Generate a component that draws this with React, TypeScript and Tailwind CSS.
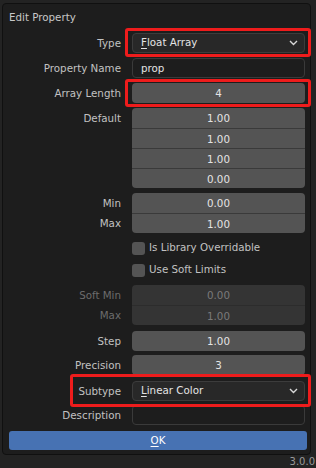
import React from "react";

const font = { fontFamily: '"DejaVu Sans", "Liberation Sans", sans-serif' };

function Chevron() {
  return (
    <svg width="9" height="6" viewBox="0 0 9 6" className="shrink-0">
      <path d="M1 1 L4.5 4.5 L8 1" fill="none" stroke="#d8d8d8" strokeWidth="1.4" />
    </svg>
  );
}

function Row({ label, dim, children }: { label: string; dim?: boolean; children: React.ReactNode }) {
  return (
    <div className="flex items-start gap-[11px]">
      <div
        className={`w-[113px] shrink-0 text-right text-[10.3px] leading-[20px] ${dim ? "text-[#6c6c6c]" : "text-[#c2c2c2]"}`}
      >
        {label}
      </div>
      <div className="w-[174px]">{children}</div>
    </div>
  );
}

function NumField({ value }: { value: string }) {
  return (
    <div className="h-[20px] rounded-[4px] bg-[#545454] text-center text-[10.3px] leading-[20px] text-[#e4e4e4]">{value}</div>
  );
}

function Stack({ values, disabled }: { values: string[]; disabled?: boolean }) {
  return (
    <div className={`flex flex-col overflow-hidden rounded-[4px] ${disabled ? "bg-[#343434]" : "bg-[#545454]"}`}>
      {values.map((v, i) => (
        <div
          key={i}
          className={`h-[20px] text-center text-[10.3px] leading-[20px] ${
            disabled ? "text-[#7a7a7a]" : "text-[#e4e4e4]"
          } ${i > 0 ? (disabled ? "border-t border-[#2c2c2c]" : "border-t border-[#3a3a3a]") : ""}`}
        >
          {v}
        </div>
      ))}
    </div>
  );
}

function Dropdown({ first, rest }: { first: string; rest: string }) {
  return (
    <div className="flex h-[20px] items-center justify-between rounded-[4px] border border-[#3c3c3c] bg-[#282828] pl-[8px] pr-[6px] text-[10.3px] text-[#e4e4e4]">
      <span>
        <span className="underline underline-offset-2">{first}</span>
        {rest}
      </span>
      <Chevron />
    </div>
  );
}

function TextField({ value }: { value: string }) {
  return (
    <div className="h-[20px] rounded-[4px] border border-[#3a3a3a] bg-[#1d1d1d] pl-[8px] text-[10.3px] leading-[18px] text-[#e4e4e4]">{value}</div>
  );
}

function Check({ label }: { label: string }) {
  return (
    <div className="flex h-[22px] items-center gap-[4px] pl-[124px]">
      <div className="h-[13px] w-[13px] rounded-[3px] bg-[#545454]" />
      <span className="text-[10.3px] text-[#c2c2c2]">{label}</span>
    </div>
  );
}

export default function App() {
  return (
    <div className="relative h-[468px] w-[316px] overflow-hidden bg-[#232323]" style={font}>
      <div className="ml-[2px] mt-[3px] h-[452px] w-[309px] rounded-[4px] border border-[#101010] bg-[#1d1d1d] px-[5px] pt-[5px]">
        <div className="mb-[8px] h-[16px] pl-[1px] text-[10.3px] leading-[16px] text-[#c8c8c8]">Edit Property</div>
        <div className="flex flex-col">
          <Row label="Type">
            <Dropdown first="F" rest="loat Array" />
          </Row>
          <div className="h-[5px]" />
          <Row label="Property Name">
            <TextField value="prop" />
          </Row>
          <div className="h-[5px]" />
          <Row label="Array Length">
            <NumField value="4" />
          </Row>
          <div className="h-[5px]" />
          <Row label="Default">
            <Stack values={["1.00", "1.00", "1.00", "0.00"]} />
          </Row>
          <div className="h-[5px]" />
          <div className="relative">
            <Row label="Min">
              <Stack values={["0.00", "1.00"]} />
            </Row>
            <div className="absolute left-0 top-[20px] w-[113px] text-right text-[10.3px] leading-[20px] text-[#c2c2c2]">Max</div>
          </div>
          <div className="h-[4px]" />
          <Check label="Is Library Overridable" />
          <Check label="Use Soft Limits" />
          <div className="h-[4px]" />
          <div className="relative">
            <Row label="Soft Min" dim>
              <Stack values={["0.00", "1.00"]} disabled />
            </Row>
            <div className="absolute left-0 top-[20px] w-[113px] text-right text-[10.3px] leading-[20px] text-[#6c6c6c]">Max</div>
          </div>
          <div className="h-[6px]" />
          <Row label="Step">
            <NumField value="1.00" />
          </Row>
          <div className="h-[4px]" />
          <Row label="Precision">
            <NumField value="3" />
          </Row>
          <div className="h-[6px]" />
          <Row label="Subtype">
            <Dropdown first="L" rest="inear Color" />
          </Row>
          <div className="h-[4px]" />
          <Row label="Description">
            <TextField value="" />
          </Row>
          <div className="h-[6px]" />
          <div className="ml-[1px] h-[19px] w-[298px] rounded-[3px] bg-[#4772b3] text-center text-[10.3px] leading-[19px] text-white">
            <span className="underline underline-offset-2">O</span>K
          </div>
        </div>
      </div>
      <div className="absolute right-[1px] top-[454px] text-[10px] text-[#9a9a9a]">3.0.0</div>

      {/* red highlight boxes */}
      <div className="pointer-events-none absolute left-[125px] top-[28px] h-[29px] w-[186px] rounded-[3px] border-[3px] border-[#ee1c1c]" />
      <div className="pointer-events-none absolute left-[125px] top-[79px] h-[28px] w-[186px] rounded-[3px] border-[3px] border-[#ee1c1c]" />
      <div className="pointer-events-none absolute left-[70px] top-[374px] h-[33px] w-[241px] rounded-[3px] border-[3px] border-[#ee1c1c]" />
    </div>
  );
}
